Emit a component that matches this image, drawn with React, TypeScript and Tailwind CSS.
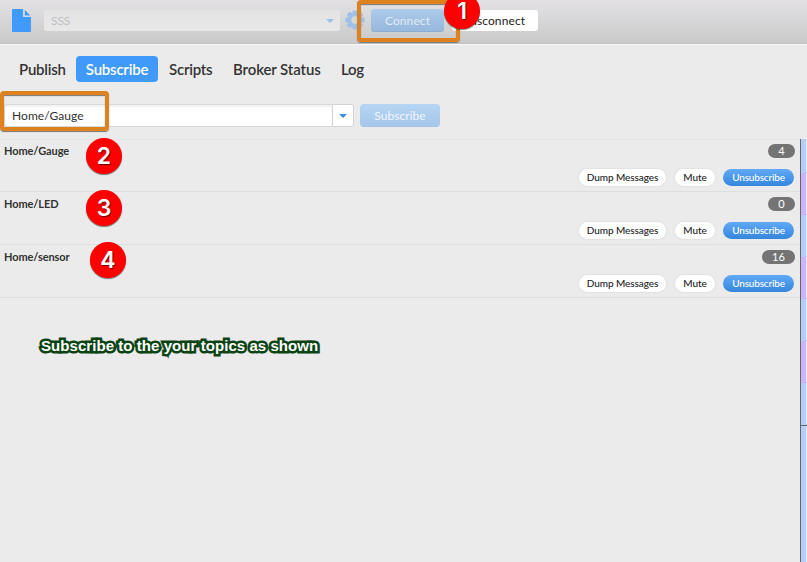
import React from 'react';

const rows = [
  { topic: 'Home/Gauge', count: '4', width: 'w-[27px]', box: 'h-[52px] pt-[4px]' },
  { topic: 'Home/LED', count: '0', width: 'w-[27px]', box: 'h-[53px] pt-[5px]' },
  { topic: 'Home/sensor', count: '16', width: 'w-[33px]', box: 'h-[53px] pt-[5px]' },
];

const stripes = [
  { h: 'h-[34px]', c: 'bg-[#b3cdff]' },
  { h: 'h-[42px]', c: 'bg-[#ccb3ff]' },
  { h: 'h-[42px]', c: 'bg-[#b3cdff]' },
  { h: 'h-[42px]', c: 'bg-[#ccb3ff]' },
  { h: 'h-[42px]', c: 'bg-[#b3cdff]' },
  { h: 'h-[42px]', c: 'bg-[#ccb3ff]' },
  { h: 'h-[42px]', c: 'bg-[#b3cdff]' },
];

function Marker({ n, place }: { n: string; place: string }) {
  return (
    <div
      className={`absolute z-20 flex h-9 w-9 items-center justify-center rounded-full bg-[#fd0000] font-['Inter',sans-serif] text-[23px] leading-none font-semibold text-white shadow-[0_1px_1px_rgba(0,0,0,0.5)] [text-shadow:1px_1px_1px_rgba(0,0,0,0.6)] ${place}`}
    >
      {n}
    </div>
  );
}

function Caret({ color }: { color: string }) {
  return (
    <svg width="8" height="4" viewBox="0 0 8 4" className={color}>
      <path d="M0 0H8L4 4Z" fill="currentColor" />
    </svg>
  );
}

function Gear() {
  return (
    <svg width="20" height="20" viewBox="-10 -10 20 20">
      <g fill="#9dc1ea">
        {[0, 45, 90, 135].map((a) => (
          <rect key={a} x="-2.4" y="-9.6" width="4.8" height="19.2" rx="1.2" transform={`rotate(${a})`} />
        ))}
        <circle r="7.4" />
      </g>
      <circle r="3.7" fill="#d9d9da" />
    </svg>
  );
}

export default function App() {
  return (
    <div className="relative flex h-[562px] w-[807px] flex-col overflow-hidden bg-[#ebebeb] font-['Lato',sans-serif] text-[#333]">
      <header className="flex h-[45px] shrink-0 items-start border-b border-[#f8f8f8] bg-linear-to-b from-[#e3e1e4] to-[#c9c9c9] pl-3 shadow-[inset_0_-1px_0_#c3c3c3]">
        <svg width="19" height="23" viewBox="0 0 19 23" className="mt-[9px]">
          <path d="M1 0H11V8H19V22Q19 23 18 23H1Q0 23 0 22V1Q0 0 1 0Z" fill="#3f9afb" />
          <path d="M12.8 1L18.2 6.4H12.8Z" fill="#3f9afb" />
          <path d="M11.4 0V7.4H19" fill="none" stroke="#c4dcf6" strokeWidth="1" />
        </svg>
        <div className="mt-[10px] ml-[13px] flex h-[21px] w-[296px] items-center justify-between rounded-[3px] bg-linear-to-b from-[#e3e3e4] to-[#e8e8e8] pr-[6px] pl-[7px] text-[12px] text-[#c0c0c0]">
          <span className="tracking-[-0.1px]">SSS</span>
          <Caret color="text-[#9dbfe6]" />
        </div>
        <div className="mt-[10px] ml-[5px]">
          <Gear />
        </div>
        <button className="mt-[9px] ml-[6px] h-[23px] w-[73px] rounded-[4px] bg-linear-to-b from-[#adcbe9] to-[#95b7dc] pt-px text-[12px] tracking-[0.1px] text-[#e2eaf3] shadow-[inset_0_-1px_0_#8aadd2]">
          Connect
        </button>
        <button className="mt-[10px] ml-[8px] h-[21px] w-[86px] rounded-[3px] bg-white text-[12px] tracking-[0.1px] whitespace-nowrap text-[#222]">
          Disconnect
        </button>
      </header>

      <nav className="mt-[11px] flex h-[26px] shrink-0 items-center pl-[9px] text-[15px] font-semibold tracking-[-0.22px] whitespace-nowrap">
        <a className="w-[67px] pl-[10px]">Publish</a>
        <a className="flex h-[26px] w-[82px] items-center justify-center rounded-[4px] bg-[#3f9afb] text-white">Subscribe</a>
        <a className="w-[64px] pl-[11px]">Scripts</a>
        <a className="w-[108px] pl-[11px] tracking-[-0.1px]">Broker Status</a>
        <a className="pl-[11px]">Log</a>
      </nav>

      <div className="mt-[22px] flex h-[23px] shrink-0 pl-[4px] text-[12px]">
        <div className="flex h-[23px] w-[328px] items-center rounded-l-[3px] border border-r-0 border-[#d9d9d9] bg-white pl-[7px] tracking-[0.05px] shadow-[inset_0_2px_2px_#f1f1f1]">
          Home/Gauge
        </div>
        <div className="flex w-[22px] items-center justify-center rounded-r-[3px] border border-[#d3d3d3] bg-white">
          <Caret color="text-[#3990e8]" />
        </div>
        <button className="ml-[6px] h-[23px] w-[80px] rounded-[4px] bg-linear-to-b from-[#b6d5f4] to-[#a5c6e9] tracking-[0.05px] text-[#f1f6fc]">
          Subscribe
        </button>
      </div>

      <main className="mt-[12px] flex flex-1">
        <section className="w-[800px]">
          <div className="h-px bg-[#e4e4e4]" />
          {rows.map((r) => (
            <div key={r.topic} className={`border-b border-[#dedede] pr-[5px] pl-[4px] ${r.box}`}>
              <div className="flex h-[14px] items-center justify-between">
                <span className="text-[11px] font-bold tracking-[-0.1px]">{r.topic}</span>
                <span className={`flex h-[14px] items-center justify-center rounded-full bg-[#747474] text-[11px] text-white ${r.width}`}>{r.count}</span>
              </div>
              <div className="mt-[11px] mr-px flex justify-end text-[10px] font-medium tracking-[-0.08px] whitespace-nowrap text-[#222]">
                <button className="h-[17px] w-[87px] rounded-full bg-white shadow-[0_0_1px_1px_#e2e2e2]">Dump Messages</button>
                <button className="ml-[9px] h-[17px] w-[40px] rounded-full bg-white shadow-[0_0_1px_1px_#e2e2e2]">Mute</button>
                <button className="ml-[8px] h-[17px] w-[71px] rounded-full bg-linear-to-b from-[#62a9f7] to-[#3386dd] tracking-[-0.18px] text-white">Unsubscribe</button>
              </div>
            </div>
          ))}
        </section>
        <aside className="flex w-[7px] flex-col border-l border-[#666]">
          {stripes.map((s, i) => (
            <div key={i} className={`flex items-end ${s.h}`}>
              <div className={`h-full w-[5px] ${s.c}`} />
              <div className="h-px w-px bg-[#c4c4c4]" />
            </div>
          ))}
          <div className="h-px bg-[#666]" />
          <div className="w-[5px] flex-1 bg-[#b3cdff]" />
        </aside>
      </main>

      <div className="absolute top-[0px] left-[357px] z-10 h-[42px] w-[103px] rounded-[4px] border-4 border-[#dd821f] shadow-[0_1px_1px_#777,inset_0_1px_1px_#777]" />
      <div className="absolute top-[91px] left-0 z-10 h-[40px] w-[109px] rounded-[4px] border-4 border-[#dd821f] shadow-[0_1px_1px_#777,inset_0_1px_1px_#777]" />
      <Marker n="1" place="top-[-7px] left-[444px]" />
      <Marker n="2" place="top-[138px] left-[86px]" />
      <Marker n="3" place="top-[190px] left-[86px]" />
      <Marker n="4" place="top-[242px] left-[90px]" />
      <div className="absolute top-[337px] left-[41px] font-['Liberation_Sans',sans-serif] text-[15px] leading-[18px] font-bold tracking-[0.06px] whitespace-nowrap text-white [-webkit-text-stroke:5px_#0b4314] [paint-order:stroke_fill] [stroke-linejoin:round]">
        Subscribe to the your topics as shown
      </div>
    </div>
  );
}
